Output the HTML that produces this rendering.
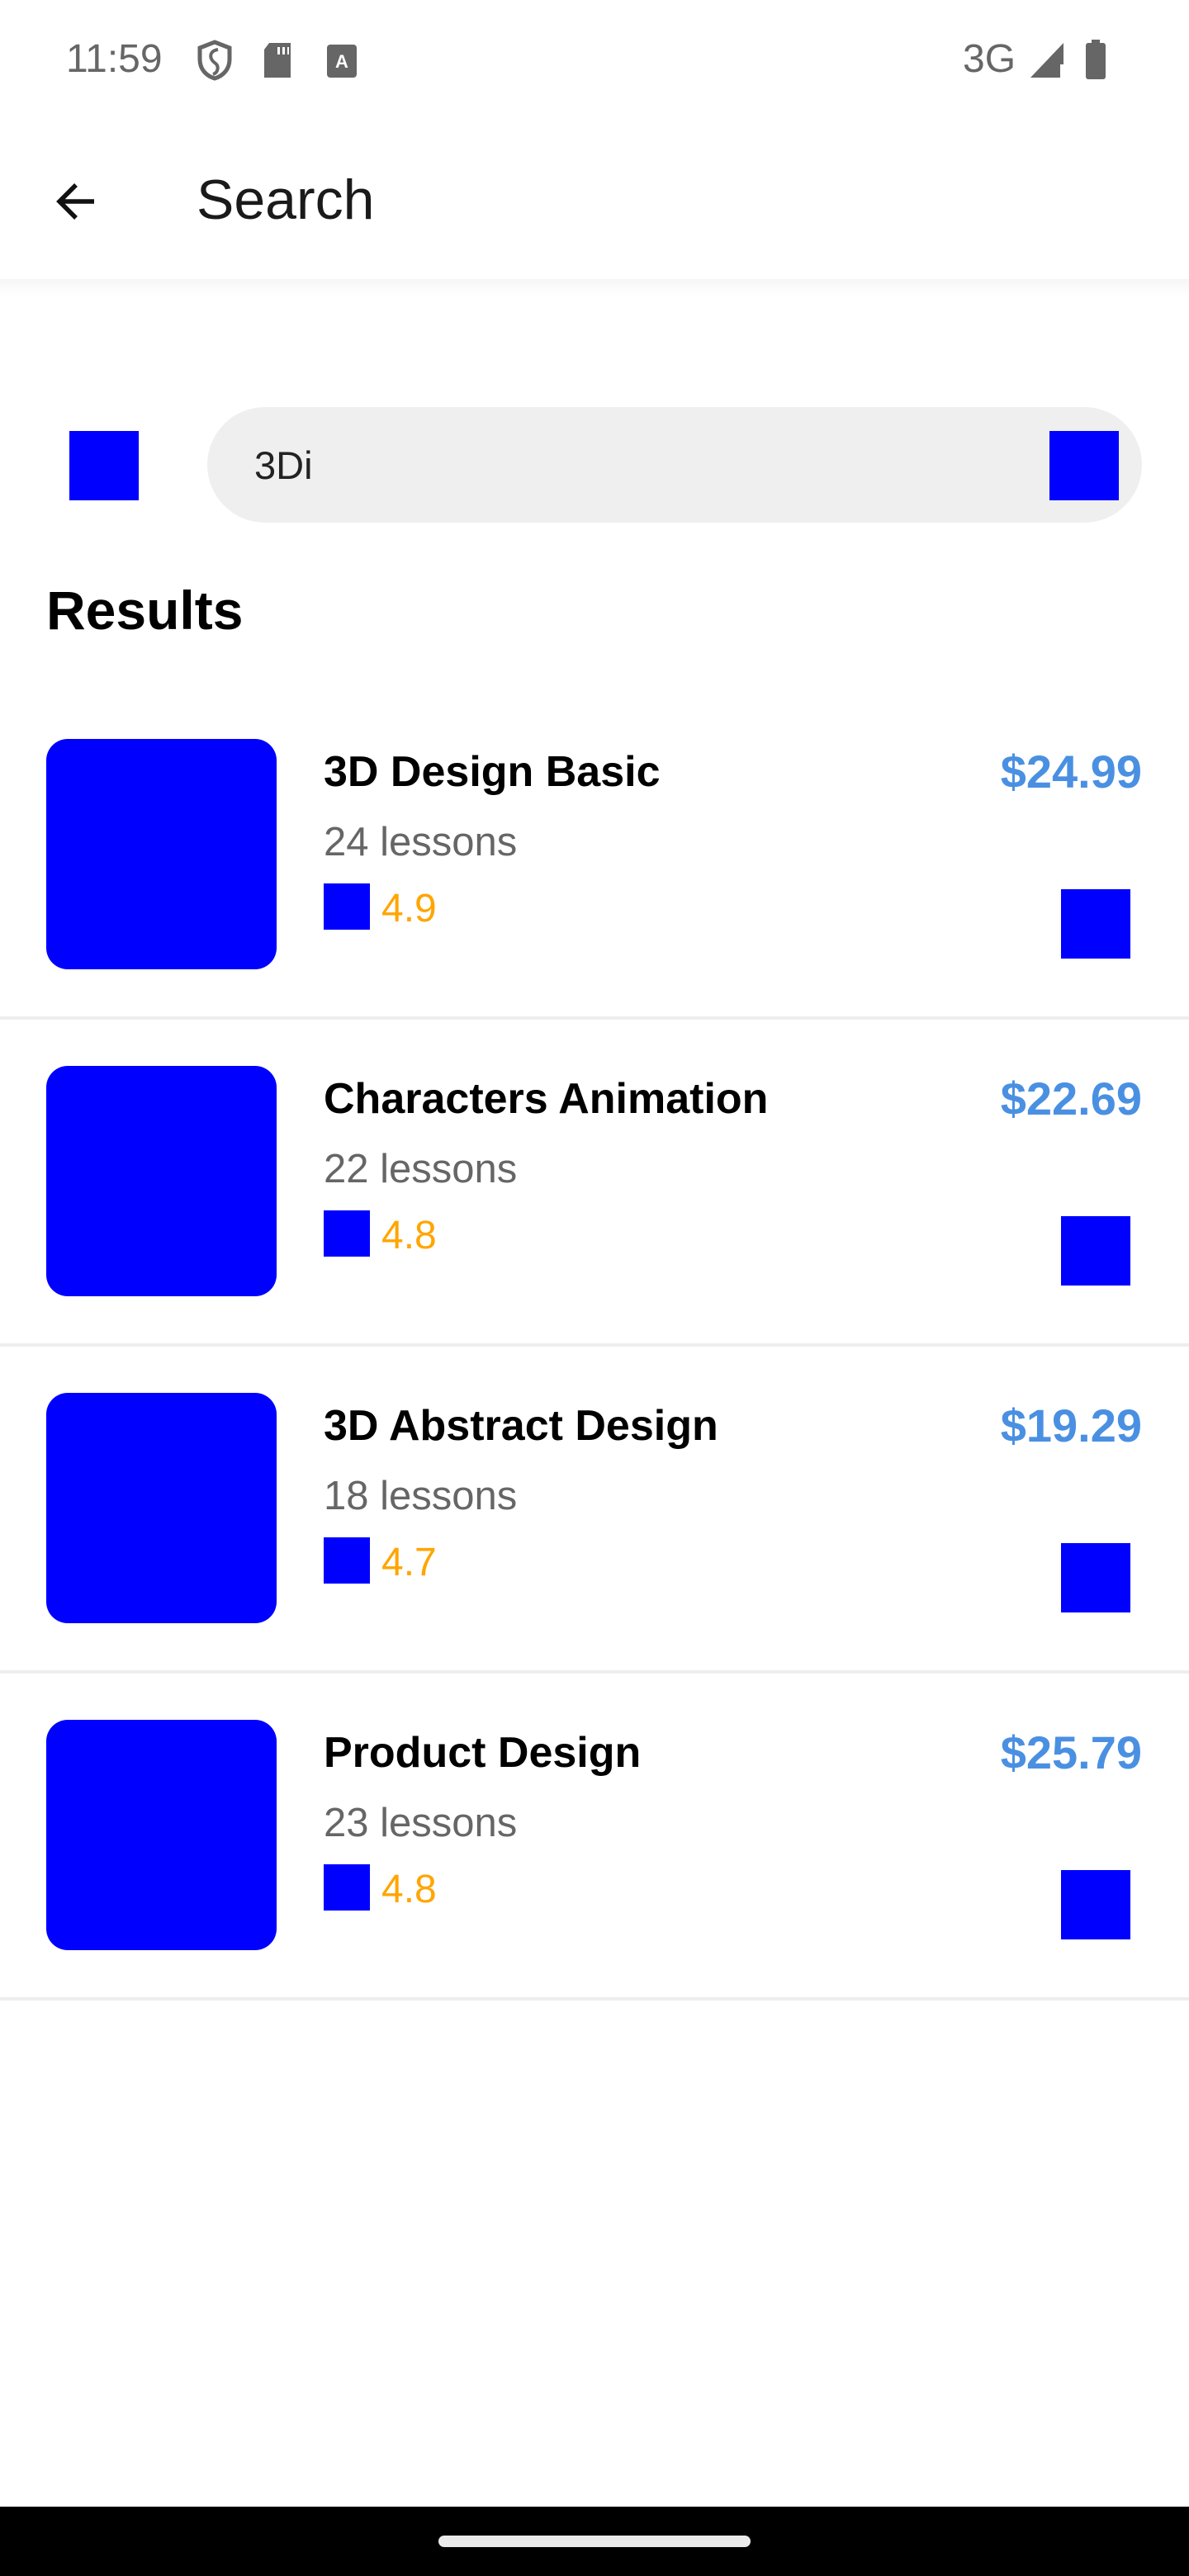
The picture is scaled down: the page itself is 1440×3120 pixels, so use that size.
<!DOCTYPE html>
<html><head><meta charset="utf-8"><style>
*{margin:0;padding:0;box-sizing:border-box}
body{width:1440px;height:3120px;background:#fff;position:relative;overflow:hidden;font-family:"Liberation Sans",Roboto,sans-serif}
.a{position:absolute}
.b{background:#0000ff}
.t{white-space:nowrap;line-height:1}
.ti{left:392px;top:14px;font-size:52px;font-weight:bold;color:#000}
.pr{right:57px;top:12px;font-size:56px;font-weight:bold;color:#4a90e2}
.le{left:392px;top:101px;font-size:49px;color:#666}
.ra{left:462px;top:182px;font-size:48px;color:#ffa500}
</style></head><body>
<!-- status bar -->
<div class="a t" style="left:80px;top:48px;font-size:48px;color:#666">11:59</div>
<svg class="a" style="left:236px;top:48px" width="48" height="50" viewBox="0 0 48 50"><path d="M24 3 L42 10 V24 C42 36 34 44 24 47 C14 44 6 36 6 24 V10 Z" fill="none" stroke="#666" stroke-width="5"/><path d="M28 12 C16 14 18 24 24 28 C30 32 28 40 22 42" fill="none" stroke="#666" stroke-width="4"/></svg>
<svg class="a" style="left:316px;top:50px" width="40" height="46" viewBox="0 0 40 46"><path d="M10 2 H36 V44 H4 V10 Z" fill="#666"/><rect x="20" y="7" width="3" height="9" fill="#fff"/><rect x="26" y="7" width="3" height="9" fill="#fff"/><rect x="32" y="7" width="2" height="9" fill="#fff"/></svg>
<svg class="a" style="left:396px;top:54px" width="36" height="40" viewBox="0 0 36 40"><rect x="0" y="0" width="36" height="40" rx="4" fill="#666"/><text x="18" y="28" font-size="22" font-weight="bold" fill="#fff" text-anchor="middle" font-family="Liberation Sans">A</text></svg>
<div class="a t" style="left:1166px;top:48px;font-size:48px;color:#666">3G</div>
<svg class="a" style="left:1246px;top:50px" width="44" height="46" viewBox="0 0 44 46"><path d="M42 2 V44 H2 Z" fill="#666"/><rect x="38" y="28" width="4" height="16" fill="#fff"/></svg>
<svg class="a" style="left:1314px;top:48px" width="26" height="48" viewBox="0 0 26 48"><rect x="8" y="0" width="10" height="6" fill="#666"/><rect x="1" y="4" width="24" height="44" rx="3" fill="#666"/></svg>
<!-- app bar -->
<svg class="a" style="left:62px;top:214px" width="60" height="60" viewBox="0 0 60 60"><path d="M52 30 H12 M30 10 L10 30 L30 50" fill="none" stroke="#111" stroke-width="5.5"/></svg>
<div class="a t" style="left:238px;top:208px;font-size:68px;color:#1a1a1a">Search</div>
<div class="a" style="left:0;top:338px;width:1440px;height:20px;background:linear-gradient(#f6f6f6,#fff)"></div>
<!-- search row -->
<div class="a b" style="left:84px;top:522px;width:84px;height:84px"></div>
<div class="a" style="left:251px;top:493px;width:1132px;height:140px;border-radius:70px;background:#efefef"></div>
<div class="a t" style="left:308px;top:540px;font-size:47px;color:#222">3Di</div>
<div class="a b" style="left:1271px;top:522px;width:84px;height:84px"></div>
<div class="a t" style="left:56px;top:706px;font-size:66px;font-weight:bold;color:#000">Results</div>

<!-- cards -->
<div class="a" style="left:0;top:895px;width:1440px">
 <div class="a b" style="left:56px;top:0;width:279px;height:279px;border-radius:26px"></div>
 <div class="a t ti">3D Design Basic</div>
 <div class="a t pr">$24.99</div>
 <div class="a t le">24 lessons</div>
 <div class="a b" style="left:392px;top:175px;width:56px;height:56px"></div>
 <div class="a t ra">4.9</div>
 <div class="a b" style="left:1285px;top:182px;width:84px;height:84px"></div>
</div>
<div class="a" style="left:0;top:1231px;width:1440px;height:4px;background:#eee"></div>

<div class="a" style="left:0;top:1291px;width:1440px">
 <div class="a b" style="left:56px;top:0;width:279px;height:279px;border-radius:26px"></div>
 <div class="a t ti">Characters Animation</div>
 <div class="a t pr">$22.69</div>
 <div class="a t le">22 lessons</div>
 <div class="a b" style="left:392px;top:175px;width:56px;height:56px"></div>
 <div class="a t ra">4.8</div>
 <div class="a b" style="left:1285px;top:182px;width:84px;height:84px"></div>
</div>
<div class="a" style="left:0;top:1627px;width:1440px;height:4px;background:#eee"></div>

<div class="a" style="left:0;top:1687px;width:1440px">
 <div class="a b" style="left:56px;top:0;width:279px;height:279px;border-radius:26px"></div>
 <div class="a t ti">3D Abstract Design</div>
 <div class="a t pr">$19.29</div>
 <div class="a t le">18 lessons</div>
 <div class="a b" style="left:392px;top:175px;width:56px;height:56px"></div>
 <div class="a t ra">4.7</div>
 <div class="a b" style="left:1285px;top:182px;width:84px;height:84px"></div>
</div>
<div class="a" style="left:0;top:2023px;width:1440px;height:4px;background:#eee"></div>

<div class="a" style="left:0;top:2083px;width:1440px">
 <div class="a b" style="left:56px;top:0;width:279px;height:279px;border-radius:26px"></div>
 <div class="a t ti">Product Design</div>
 <div class="a t pr">$25.79</div>
 <div class="a t le">23 lessons</div>
 <div class="a b" style="left:392px;top:175px;width:56px;height:56px"></div>
 <div class="a t ra">4.8</div>
 <div class="a b" style="left:1285px;top:182px;width:84px;height:84px"></div>
</div>
<div class="a" style="left:0;top:2419px;width:1440px;height:4px;background:#eee"></div>

<!-- nav bar -->
<div class="a" style="left:0;top:3036px;width:1440px;height:84px;background:#000"></div>
<div class="a" style="left:531px;top:3071px;width:378px;height:14px;border-radius:7px;background:#eaeaea"></div>
</body></html>
